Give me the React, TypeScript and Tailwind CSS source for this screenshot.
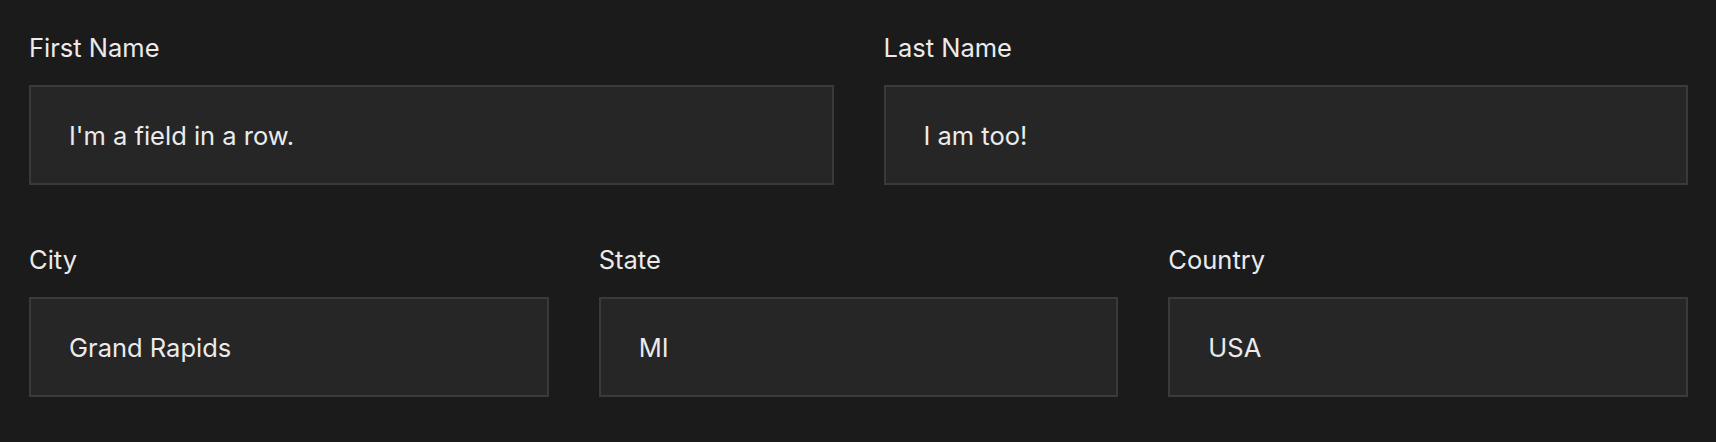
import React from 'react';

interface FieldProps {
  label: string;
  value: string;
}

const Field: React.FC<FieldProps> = ({ label, value }) => (
  <label className="flex flex-col">
    <span className="text-[25.5px] leading-[36px] text-[#ebebeb]">{label}</span>
    <input
      type="text"
      readOnly
      defaultValue={value}
      className="mt-[19px] h-[100px] w-full border-2 border-[#3a3a3a] bg-[#262626] px-[38px] font-['Inter',sans-serif] text-[25.5px] text-[#ebebeb] outline-none"
    />
  </label>
);

export default function App() {
  return (
    <div className="min-h-screen bg-[#1b1b1b] pl-[29px] pr-[28px] pt-[30px] font-['Inter',sans-serif]">
      {/* Name row */}
      <div className="grid grid-cols-2 gap-x-[50px]">
        <Field label="First Name" value="I'm a field in a row." />
        <Field label="Last Name" value="I am too!" />
      </div>

      {/* Address row */}
      <div className="mt-[57px] grid grid-cols-3 gap-x-[50px]">
        <Field label="City" value="Grand Rapids" />
        <Field label="State" value="MI" />
        <Field label="Country" value="USA" />
      </div>
    </div>
  );
}
